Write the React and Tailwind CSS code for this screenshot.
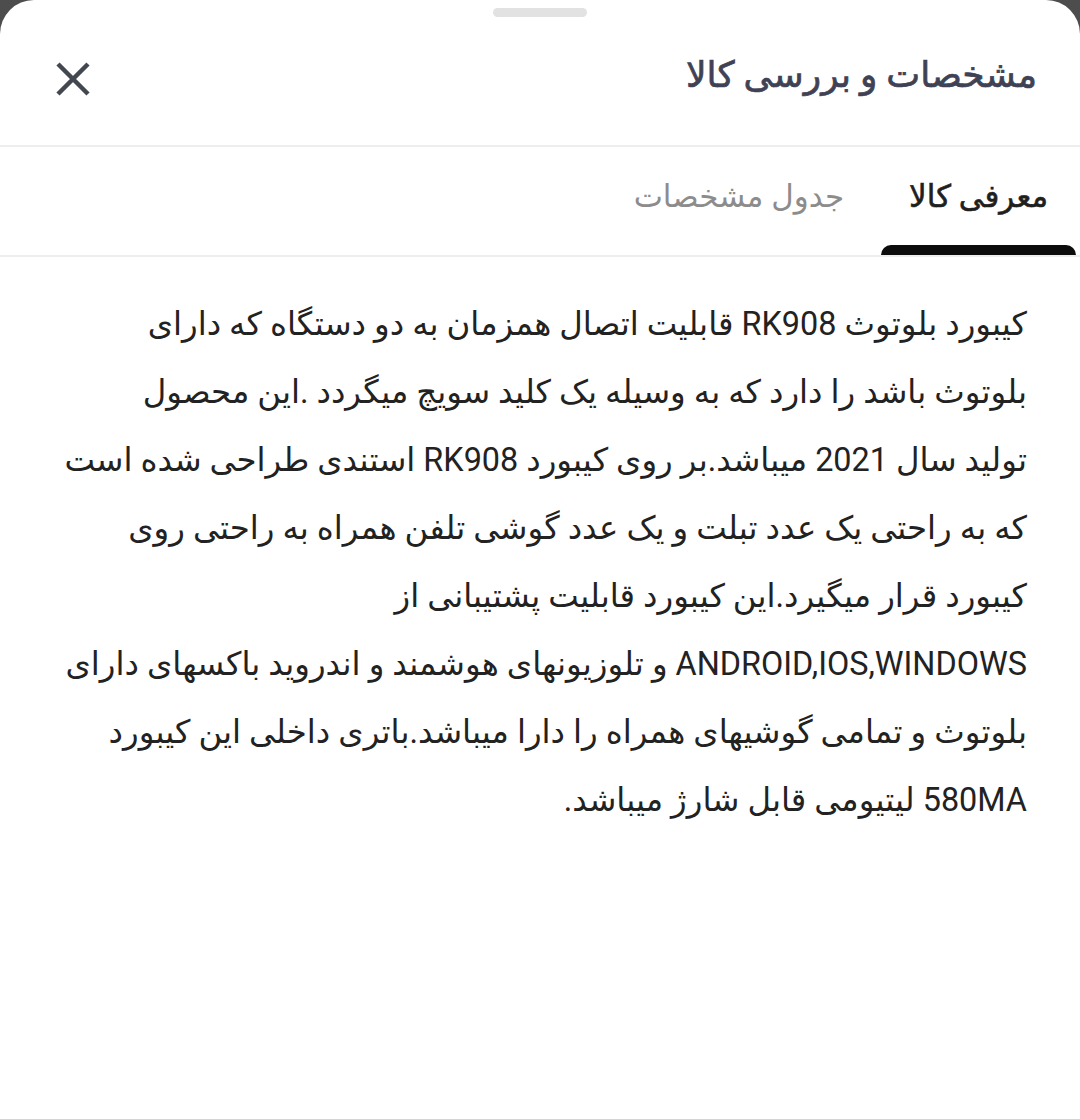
import React, { useState } from 'react';

const lines = [
  'کیبورد بلوتوث RK908 قابلیت اتصال همزمان به دو دستگاه که دارای',
  'بلوتوث باشد را دارد که به وسیله یک کلید سویچ میگردد .این محصول',
  'تولید سال 2021 میباشد.بر روی کیبورد RK908 استندی طراحی شده است',
  'که به راحتی یک عدد تبلت و یک عدد گوشی تلفن همراه به راحتی روی',
  'کیبورد قرار میگیرد.این کیبورد قابلیت پشتیبانی از',
  'ANDROID,IOS,WINDOWS و تلوزیونهای هوشمند و اندروید باکسهای دارای',
  'بلوتوث و تمامی گوشیهای همراه را دارا میباشد.باتری داخلی این کیبورد',
  '580MA لیتیومی قابل شارژ میباشد.',
];

const tabs = [
  { id: 'intro', label: 'معرفی کالا' },
  { id: 'specs', label: 'جدول مشخصات' },
];

// Product review bottom sheet
export default function App() {
  const [active, setActive] = useState('intro');

  return (
    <div className="bg-[#4d4d4d] min-h-[1119px]" style={{ fontFamily: 'Roboto, "DejaVu Sans", sans-serif' }}>
      <div dir="rtl" className="bg-white rounded-t-[34px] min-h-[1119px] flex flex-col">
        {/* Header */}
        <div className="flex flex-col border-b-2 border-[#eeeeee] pb-[12px]">
          <div className="flex justify-center pt-[8px]">
            <div className="w-[94px] h-[9px] rounded-full bg-[#e2e2e2]" />
          </div>
          <div className="h-[116px] flex items-center justify-between pr-[43px] pl-[52px]">
            <h1 className="text-[36px] text-[#3f4254] [-webkit-text-stroke:0.7px_#3f4254]">مشخصات و بررسی کالا</h1>
            <button className="mt-2 w-[42px] h-[42px] flex items-center justify-center text-[#424750]">
              <svg width="36" height="36" viewBox="0 0 36 36" fill="none" stroke="currentColor" strokeWidth="4.5" strokeLinecap="butt">
                <path d="M3 3L33 33M33 3L3 33" />
              </svg>
            </button>
          </div>
        </div>

        {/* Tabs */}
        <div className="flex h-[110px] border-b-2 border-[#eeeeee] pr-[4px] gap-[9px]">
          {tabs.map((t) => {
            const isActive = active === t.id;
            return (
              <button
                key={t.id}
                onClick={() => setActive(t.id)}
                className="flex flex-col h-full"
              >
                <span
                  className={`flex-1 flex items-center px-[28px] pt-[2px] text-[31px] whitespace-nowrap ${
                    isActive ? 'text-[#1f1f1f] [-webkit-text-stroke:0.6px_#1f1f1f]' : 'text-[#8c8c8c]'
                  }`}
                >
                  {t.label}
                </span>
                <span className={`h-[10px] w-full rounded-t-[10px] ${isActive ? 'bg-[#0c0c0c]' : 'bg-transparent'}`} />
              </button>
            );
          })}
        </div>

        {/* Body */}
        <div className="pt-[33px] pr-[53px] pl-[53px] text-[32.4px] leading-[68px] text-[#222222]">
          {lines.map((line, i) => (
            <p key={i} className="whitespace-nowrap">{line}</p>
          ))}
        </div>
      </div>
    </div>
  );
}
